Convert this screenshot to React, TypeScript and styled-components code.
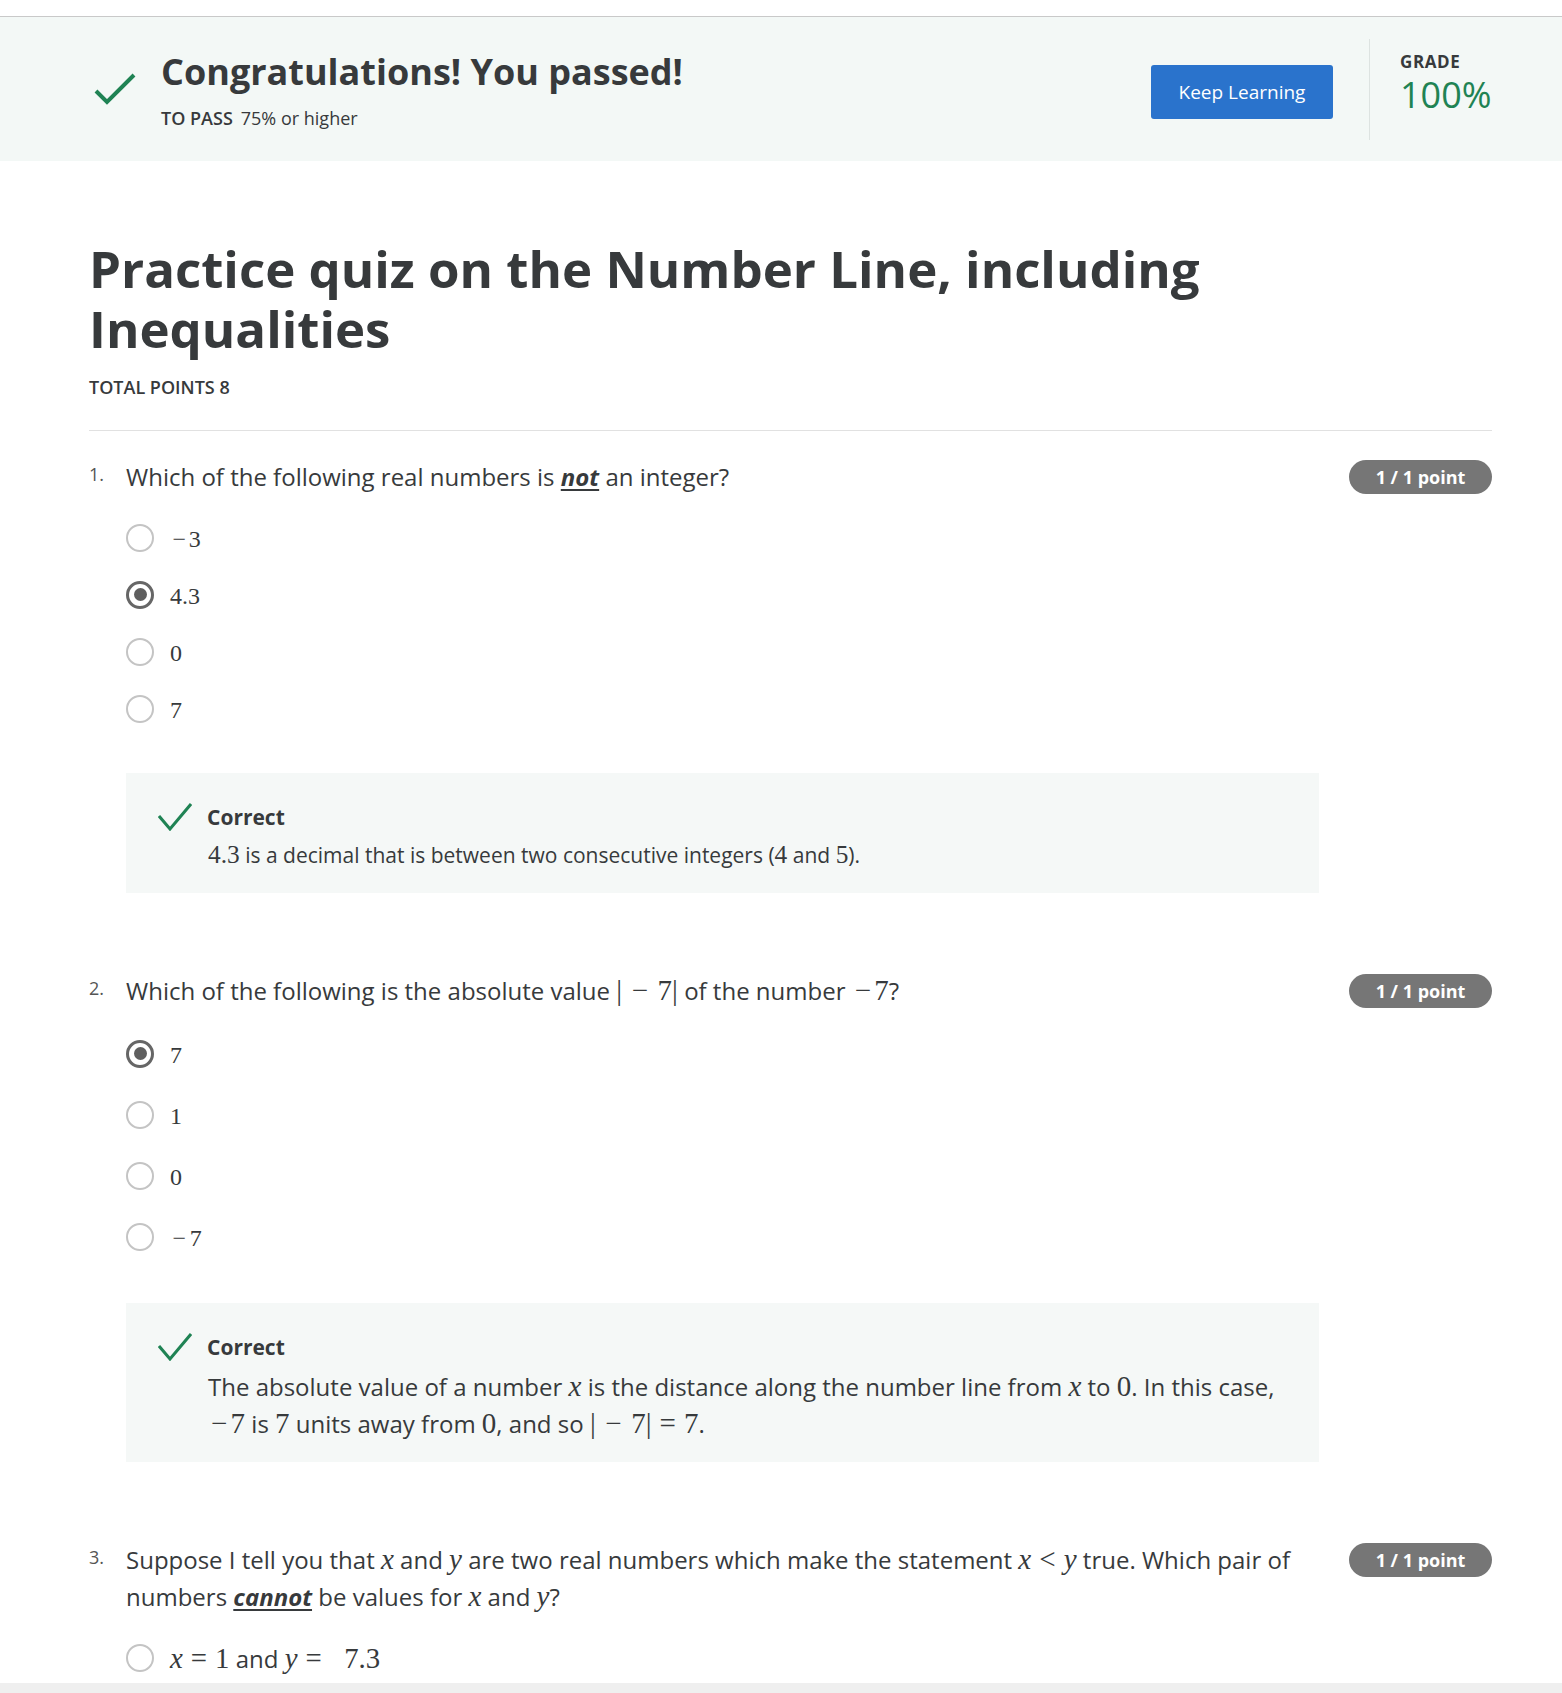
import React from "react";
import styled, { createGlobalStyle } from "styled-components";

const GlobalStyle = createGlobalStyle`
  body {
    margin: 0;
    font-family: "Open Sans", "Liberation Sans", sans-serif;
    color: #373a3c;
    background: #fff;
  }
`;

const TopStrip = styled.div`
  height: 16px;
  border-bottom: 1px solid #c9c9c9;
`;

const Band = styled.div`
  background: #f3f8f6;
  height: 144px;
`;

const Container = styled.div`
  width: 1403px;
  margin-left: 89px;
`;

const HeaderInner = styled(Container)`
  display: flex;
  align-items: center;
  height: 100%;
`;

const BigCheck = styled.svg`
  width: 42px;
  height: 34px;
  margin-left: 5px;
  margin-right: 25px;
  flex-shrink: 0;
`;

const HeaderText = styled.div`
  display: flex;
  flex-direction: column;
  margin-top: 2px;
`;

const Passed = styled.h1`
  margin: 0;
  font-size: 36px;
  line-height: 44px;
  font-weight: 700;
`;

const PassLine = styled.div`
  margin-top: 12px;
  font-size: 18px;
  line-height: 24px;
  b {
    font-weight: 600;
    margin-right: 8px;
  }
`;

const RightGroup = styled.div`
  margin-left: auto;
  display: flex;
  align-items: center;
`;

const KeepButton = styled.button`
  width: 182px;
  height: 54px;
  margin-top: 6px;
  background: #2a73cc;
  color: #fff;
  border: none;
  border-radius: 3px;
  font-family: "Open Sans", sans-serif;
  font-size: 19px;
  cursor: pointer;
`;

const VDivider = styled.div`
  width: 1px;
  height: 101px;
  background: #dde3e1;
  margin: 0 30px 0 36px;
`;

const Grade = styled.div`
  width: 92px;
  padding-bottom: 12px;
`;

const GradeLabel = styled.div`
  font-size: 17px;
  line-height: 20px;
  font-weight: 700;
  letter-spacing: 0.6px;
`;

const GradeValue = styled.div`
  margin-top: 3px;
  font-size: 36px;
  line-height: 40px;
  color: #1f8354;
`;

const Main = styled(Container)`
  padding-top: 77px;
`;

const QuizTitle = styled.h2`
  margin: 0;
  font-size: 51px;
  line-height: 60px;
  font-weight: 700;
`;

const TotalPoints = styled.div`
  margin-top: 17px;
  font-size: 18px;
  line-height: 24px;
  font-weight: 600;
`;

const Rule = styled.hr`
  margin: 31px 0 0;
  border: none;
  border-top: 1px solid #e1e1e1;
`;

const QuestionBlock = styled.section`
  padding-top: 27px;
  padding-bottom: 79px;
  & + & {
    padding-top: 0;
  }
`;

const QuestionRow = styled.div`
  display: flex;
  align-items: flex-start;
`;

const QNumber = styled.div`
  width: 37px;
  flex-shrink: 0;
  font-size: 18px;
  line-height: 32px;
  color: #555;
`;

const QText = styled.div`
  flex: 1;
  margin-right: 40px;
  font-size: 24px;
  line-height: 37px;
  em {
    font-weight: 700;
    text-decoration: underline;
    text-underline-offset: 3px;
  }
`;

const Badge = styled.div`
  flex-shrink: 0;
  margin-top: 2px;
  height: 34px;
  width: 143px;
  border-radius: 17px;
  background: #767676;
  color: #fff;
  font-size: 18px;
  font-weight: 700;
  display: flex;
  align-items: center;
  justify-content: center;
`;

const Options = styled.div`
  margin-top: 14px;
  padding-left: 37px;
`;

const OptionRow = styled.div<{ $h: number }>`
  height: ${(p) => p.$h}px;
  display: flex;
  align-items: center;
  gap: 16px;
  font-size: 24px;
`;

const Radio = styled.span<{ $checked?: boolean }>`
  width: 28px;
  height: 28px;
  box-sizing: border-box;
  border-radius: 50%;
  border: ${(p) => (p.$checked ? "3px solid #666" : "2.5px solid #c4c4c4")};
  background: #fff;
  flex-shrink: 0;
  display: flex;
  align-items: center;
  justify-content: center;
  &::after {
    content: "";
    display: ${(p) => (p.$checked ? "block" : "none")};
    width: 13px;
    height: 13px;
    border-radius: 50%;
    background: #5f5f5f;
  }
`;

const Feedback = styled.div`
  margin: 36px 0 0 37px;
  width: 1193px;
  box-sizing: border-box;
  background: #f5f8f7;
  padding: 30px 33px 20px;
`;

const FeedbackHead = styled.div`
  display: flex;
  align-items: center;
  gap: 15px;
  font-size: 21px;
  line-height: 26px;
  font-weight: 700;
`;

const SmallCheck = styled.svg`
  width: 34px;
  height: 28px;
  margin-left: -1px;
`;

const Explanation = styled.div<{ $size: number }>`
  margin: 7px 0 0 49px;
  font-size: ${(p) => p.$size}px;
  line-height: ${(p) => (p.$size > 22 ? 37 : 35)}px;
`;

const M = styled.span<{ $scale?: number }>`
  font-family: "Liberation Serif", "DejaVu Serif", serif;
  font-size: ${(p) => p.$scale ?? 1.21}em;
  line-height: 1;
  white-space: nowrap;
`;

const V = styled.i`
  font-style: italic;
`;

const Neg = styled.span<{ $gap?: number }>`
  display: inline-block;
  width: 0.778em;
  text-align: center;
  margin-right: ${(p) => p.$gap ?? 0}em;
`;

const Bin = styled.span`
  display: inline-block;
  width: 0.778em;
  text-align: center;
  margin: 0 0.222em;
`;

const Rel = styled.span`
  margin: 0 0.278em;
`;

const BottomBar = styled.div`
  position: fixed;
  left: 0;
  right: 0;
  bottom: 0;
  height: 10px;
  background: #efefef;
`;

const CheckPath = ({ small }: { small?: boolean }) =>
  small ? (
    <SmallCheck viewBox="0 0 34 28">
      <polyline points="1,13 12,26 33,1" fill="none" stroke="#1f8354" strokeWidth="3" />
    </SmallCheck>
  ) : (
    <BigCheck viewBox="0 0 42 34">
      <polyline points="2,19 13,30 40,3" fill="none" stroke="#1f8354" strokeWidth="4" />
    </BigCheck>
  );

type QuestionProps = {
  num: number;
  prompt: React.ReactNode;
  options: React.ReactNode[];
  selected?: number;
  rowHeight: number;
  explanation?: React.ReactNode;
  explanationSize?: number;
};

const Question = ({
  num,
  prompt,
  options,
  selected,
  rowHeight,
  explanation,
  explanationSize = 24,
}: QuestionProps) => (
  <QuestionBlock>
    <QuestionRow>
      <QNumber>{num}.</QNumber>
      <QText>{prompt}</QText>
      <Badge>1 / 1 point</Badge>
    </QuestionRow>
    <Options>
      {options.map((opt, i) => (
        <OptionRow key={i} $h={rowHeight}>
          <Radio $checked={i === selected} />
          <span>{opt}</span>
        </OptionRow>
      ))}
    </Options>
    {explanation && (
      <Feedback>
        <FeedbackHead>
          <CheckPath small />
          Correct
        </FeedbackHead>
        <Explanation $size={explanationSize}>{explanation}</Explanation>
      </Feedback>
    )}
  </QuestionBlock>
);

export default function App() {
  return (
    <>
      <GlobalStyle />
      <TopStrip />
      <Band>
        <HeaderInner>
          <CheckPath />
          <HeaderText>
            <Passed>Congratulations! You passed!</Passed>
            <PassLine>
              <b>TO PASS</b>75% or higher
            </PassLine>
          </HeaderText>
          <RightGroup>
            <KeepButton>Keep Learning</KeepButton>
            <VDivider />
            <Grade>
              <GradeLabel>GRADE</GradeLabel>
              <GradeValue>100%</GradeValue>
            </Grade>
          </RightGroup>
        </HeaderInner>
      </Band>
      <Main>
        <QuizTitle>
          Practice quiz on the Number Line, including Inequalities
        </QuizTitle>
        <TotalPoints>TOTAL POINTS 8</TotalPoints>
        <Rule />
        <Question
          num={1}
          rowHeight={57}
          selected={1}
          explanationSize={21}
          prompt={
            <>
              Which of the following real numbers is <em>not</em> an integer?
            </>
          }
          options={[
            <M $scale={1}>
              <Neg>−</Neg>3
            </M>,
            <M $scale={1}>4.3</M>,
            <M $scale={1}>0</M>,
            <M $scale={1}>7</M>,
          ]}
          explanation={
            <>
              <M>4.3</M> is a decimal that is between two consecutive integers (<M>4</M> and <M>5</M>).
            </>
          }
        />
        <Question
          num={2}
          rowHeight={61}
          selected={0}
          prompt={
            <>
              Which of the following is the absolute value{" "}
              <M>
                |<Bin>−</Bin>7|
              </M>{" "}
              of the number{" "}
              <M>
                <Neg>−</Neg>7
              </M>
              ?
            </>
          }
          options={[
            <M $scale={1}>7</M>,
            <M $scale={1}>1</M>,
            <M $scale={1}>0</M>,
            <M $scale={1}>
              <Neg $gap={0.05}>−</Neg>7
            </M>,
          ]}
          explanation={
            <>
              The absolute value of a number <M><V>x</V></M> is the distance along the number line from{" "}
              <M><V>x</V></M> to <M>0</M>. In this case,{" "}
              <M>
                <Neg>−</Neg>7
              </M>{" "}
              is <M>7</M> units away from <M>0</M>, and so{" "}
              <M>
                |<Bin>−</Bin>7|<Rel>=</Rel>7
              </M>
              .
            </>
          }
        />
        <Question
          num={3}
          rowHeight={58}
          prompt={
            <>
              Suppose I tell you that <M><V>x</V></M> and <M><V>y</V></M> are two real numbers which make the
              statement{" "}
              <M>
                <V>x</V>
                <Rel>&lt;</Rel>
                <V>y</V>
              </M>{" "}
              true. Which pair of numbers <em>cannot</em> be values for <M><V>x</V></M> and <M><V>y</V></M>?
            </>
          }
          options={[
            <>
              <M $scale={1.2}>
                <V>x</V>
                <Rel>=</Rel>1
              </M>{" "}
              and{" "}
              <M $scale={1.2}>
                <V>y</V>
                <Rel>=</Rel>
                {"\u2002"}7.3
              </M>
            </>,
          ]}
        />
      </Main>
      <BottomBar />
    </>
  );
}
